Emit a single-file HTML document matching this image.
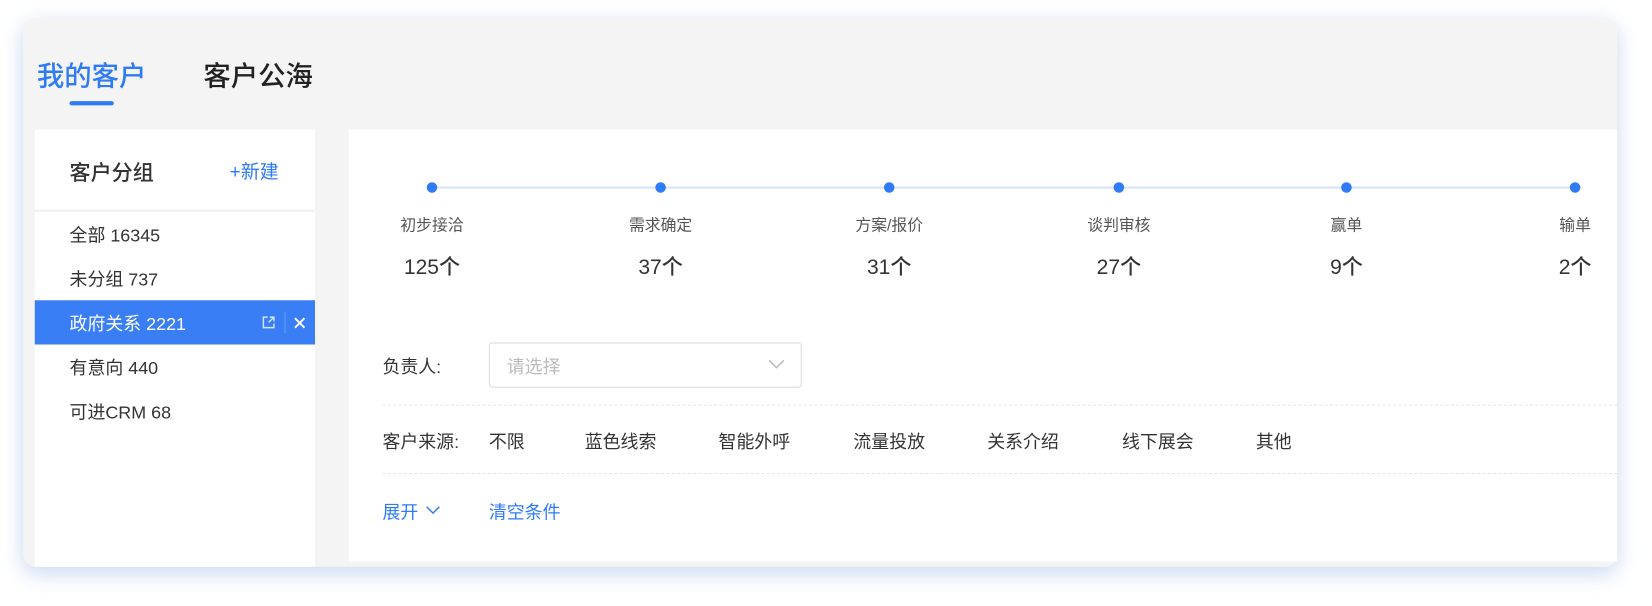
<!DOCTYPE html>
<html><head><meta charset="utf-8"><style>
html,body{margin:0;padding:0;width:1652px;height:606px;overflow:hidden;background:#fff;}
#w{position:absolute;left:0;top:0;width:1568px;height:575px;transform:scale(1.05357);transform-origin:0 0;font-family:"Liberation Sans","Noto Sans CJK SC",sans-serif;color:#333;}
.card{position:absolute;left:22px;top:17px;width:1513px;height:521px;background:#f4f4f4;border-radius:12px;box-shadow:0 6px 20px rgba(120,160,220,.4);overflow:hidden;}
.a{position:absolute;white-space:nowrap;}
.dot{position:absolute;width:10px;height:10px;border-radius:50%;background:#2f7bf5;top:173px;}
.lbl{position:absolute;top:203px;font-size:15px;color:#555;transform:translateX(-50%);white-space:nowrap;}
.cnt{position:absolute;top:237px;font-size:20px;color:#333;transform:translateX(-50%);white-space:nowrap;font-weight:500;}
.opt{position:absolute;top:405px;font-size:17px;color:#333;}
</style></head><body><div id="w">
<div class="card"></div>
<div class="a" style="left:35px;top:52px;font-size:26px;color:#2f7bf5;font-weight:500;">我的客户</div>
<div class="a" style="left:66px;top:96px;width:42px;height:4px;border-radius:2px;background:#2f7bf5;"></div>
<div class="a" style="left:193px;top:52px;font-size:26px;color:#222;font-weight:500;">客户公海</div>
<div class="a" style="left:33px;top:123px;width:266px;height:415px;background:#fff;"></div>
<div class="a" style="left:66px;top:148px;font-size:20px;color:#333;font-weight:500;">客户分组</div>
<div class="a" style="left:218px;top:149px;font-size:18px;color:#2f7bf5;">+新建</div>
<div class="a" style="left:33px;top:199px;width:266px;height:2px;background:#f0f0f0;"></div>
<div class="a" style="left:66px;top:209px;font-size:17px;">全部 16345</div>
<div class="a" style="left:66px;top:251px;font-size:17px;">未分组 737</div>
<div class="a" style="left:33px;top:285px;width:266px;height:42px;background:#3a7ef6;"></div>
<div class="a" style="left:66px;top:293px;font-size:17px;color:#fff;">政府关系 2221</div>
<svg class="a" style="left:248px;top:299px" width="14" height="14" viewBox="0 0 14 14"><path d="M6 2H2v10h10V8M8 2h4v4M12 2L7 7" fill="none" stroke="#d6e4fd" stroke-width="1.4"/></svg>
<div class="a" style="left:270px;top:296px;width:1px;height:20px;background:#6a9df8;"></div>
<svg class="a" style="left:279px;top:301px" width="11" height="11" viewBox="0 0 11 11"><path d="M1 1L10 10M10 1L1 10" stroke="#fff" stroke-width="1.8"/></svg>
<div class="a" style="left:66px;top:335px;font-size:17px;">有意向 440</div>
<div class="a" style="left:66px;top:377px;font-size:17px;">可进CRM 68</div>
<div class="a" style="left:331px;top:123px;width:1204px;height:410px;background:#fff;"></div>
<div class="a" style="left:410px;top:177px;width:1085px;height:2px;background:#d4e3fc;"></div>
<div class="dot" style="left:405px"></div><div class="dot" style="left:622px"></div><div class="dot" style="left:839px"></div><div class="dot" style="left:1057px"></div><div class="dot" style="left:1273px"></div><div class="dot" style="left:1490px"></div>
<div class="lbl" style="left:410px">初步接洽</div><div class="lbl" style="left:627px">需求确定</div><div class="lbl" style="left:844px">方案/报价</div><div class="lbl" style="left:1062px">谈判审核</div><div class="lbl" style="left:1278px">赢单</div><div class="lbl" style="left:1495px">输单</div>
<div class="cnt" style="left:410px">125个</div><div class="cnt" style="left:627px">37个</div><div class="cnt" style="left:844px">31个</div><div class="cnt" style="left:1062px">27个</div><div class="cnt" style="left:1278px">9个</div><div class="cnt" style="left:1495px">2个</div>
<div class="a" style="left:363px;top:334px;font-size:17px;">负责人:</div>
<div class="a" style="left:464px;top:325px;width:297px;height:43px;border:1px solid #ddd;border-radius:3px;box-sizing:border-box;"></div>
<div class="a" style="left:481px;top:334px;font-size:17px;color:#bbb;">请选择</div>
<svg class="a" style="left:729px;top:341px" width="16" height="10" viewBox="0 0 16 10"><path d="M1 1L8 8L15 1" fill="none" stroke="#bbb" stroke-width="1.4"/></svg>
<div class="a" style="left:363px;top:384px;width:1172px;border-top:1px dashed #e6e6e6;"></div>
<div class="opt" style="left:363px">客户来源:</div>
<div class="opt" style="left:464px">不限</div><div class="opt" style="left:555px">蓝色线索</div><div class="opt" style="left:682px">智能外呼</div><div class="opt" style="left:810px">流量投放</div><div class="opt" style="left:937px">关系介绍</div><div class="opt" style="left:1065px">线下展会</div><div class="opt" style="left:1192px">其他</div>
<div class="a" style="left:363px;top:449px;width:1172px;border-top:1px dashed #e6e6e6;"></div>
<div class="a" style="left:363px;top:472px;font-size:17px;color:#2f7bf5;">展开</div>
<svg class="a" style="left:404px;top:480px" width="14" height="9" viewBox="0 0 14 9"><path d="M1 1L7 7L13 1" fill="none" stroke="#2f7bf5" stroke-width="1.4"/></svg>
<div class="a" style="left:464px;top:472px;font-size:17px;color:#2f7bf5;">清空条件</div>
</div></body></html>
